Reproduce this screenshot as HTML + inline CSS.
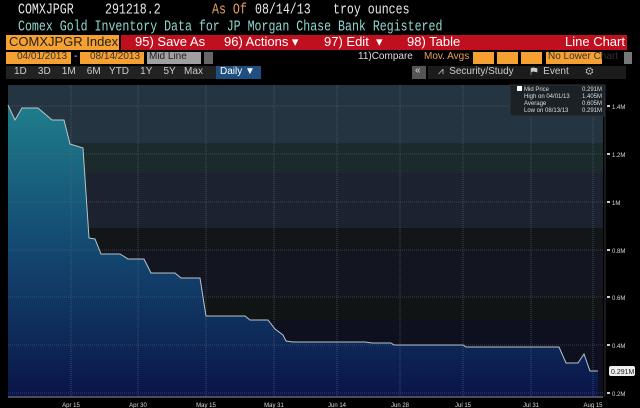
<!DOCTYPE html>
<html><head><style>
body{margin:0;width:640px;height:408px;background:#000;overflow:hidden;position:relative;font-family:"Liberation Mono",monospace;}
.a{position:absolute;white-space:nowrap;}
.s{font-family:"Liberation Sans",sans-serif;}
.h{font-size:11.6px;transform:scaleY(1.25);transform-origin:0 0;}
</style></head><body>
<div class="a h" style="left:18px;top:2px;color:#e8e8e8">COMXJPGR</div>
<div class="a h" style="left:105px;top:2px;color:#e8e8e8">291218.2</div>
<div class="a h" style="left:212px;top:2px;color:#e8a060">As Of</div>
<div class="a h" style="left:255px;top:2px;color:#e8e8e8">08/14/13</div>
<div class="a h" style="left:333px;top:2px;color:#e8e8e8">troy ounces</div>
<div class="a h" style="left:18px;top:19px;color:#8fd8d0">Comex Gold Inventory Data for JP Morgan Chase Bank Registered</div>
<div class="a" style="left:6px;top:35px;width:113px;height:15px;background:#f5a030"></div>
<div class="a s" style="left:9px;top:34px;font-size:13px;color:#202020">COMXJPGR Index</div>
<div class="a" style="left:121px;top:35px;width:506px;height:15px;background:#c01020"></div>
<div class="a s" style="left:135px;top:34px;font-size:13px;color:#fff">95) Save As</div>
<div class="a s" style="left:224px;top:34px;font-size:13px;color:#fff">96) Actions ▾</div>
<div class="a s" style="left:324px;top:34px;font-size:13px;color:#fff">97) Edit&nbsp;&nbsp;▾</div>
<div class="a s" style="left:407px;top:34px;font-size:13px;color:#fff">98) Table</div>
<div class="a s" style="left:565px;top:34px;font-size:13px;color:#fff">Line Chart</div>
<div class="a" style="left:6px;top:52px;width:65px;height:12px;background:#f5a030"></div>
<div class="a" style="left:80px;top:52px;width:64px;height:12px;background:#f5a030"></div>
<div class="a s" style="left:17px;top:51px;font-size:10px;color:#333">04/01/2013</div>
<div class="a s" style="left:74px;top:51px;font-size:10px;color:#ddd">-</div>
<div class="a s" style="left:90px;top:51px;font-size:10px;color:#333">08/14/2013</div>
<div class="a" style="left:147px;top:52px;width:54px;height:12px;background:#a0a0a0"></div>
<div class="a s" style="left:149px;top:51px;font-size:10px;color:#222">Mid Line</div>
<div class="a" style="left:204px;top:52px;width:9px;height:12px;background:#666"></div>
<div class="a s" style="left:358px;top:51px;font-size:10px;color:#ddd">11)Compare</div>
<div class="a s" style="left:424px;top:51px;font-size:10px;color:#e8a060">Mov. Avgs</div>
<div class="a" style="left:473px;top:52px;width:21px;height:12px;background:#f5a030"></div>
<div class="a" style="left:497px;top:52px;width:21px;height:12px;background:#f5a030"></div>
<div class="a" style="left:521px;top:52px;width:21px;height:12px;background:#f5a030"></div>
<div class="a" style="left:546px;top:52px;width:56px;height:12px;background:#f5a030"></div>
<div class="a s" style="left:548px;top:51px;font-size:10px;color:#333">No Lower Chart</div>
<div class="a" style="left:624px;top:52px;width:8px;height:12px;background:#777"></div>
<div class="a" style="left:6px;top:66px;width:254px;height:13px;background:#222"></div>
<div class="a s" style="left:14px;top:66px;font-size:10px;color:#ccc;word-spacing:0">1D&nbsp;&nbsp;&nbsp;&nbsp;3D&nbsp;&nbsp;&nbsp;&nbsp;1M&nbsp;&nbsp;&nbsp;&nbsp;6M&nbsp;&nbsp;&nbsp;YTD&nbsp;&nbsp;&nbsp;&nbsp;1Y&nbsp;&nbsp;&nbsp;&nbsp;5Y&nbsp;&nbsp;&nbsp;Max</div>
<div class="a" style="left:216px;top:66px;width:45px;height:13px;background:#1f4f7f"></div>
<div class="a s" style="left:220px;top:66px;font-size:10px;color:#fff">Daily ▼</div>
<div class="a" style="left:412px;top:66px;width:14px;height:13px;background:#555"></div>
<div class="a s" style="left:415px;top:65px;font-size:10px;color:#ddd">«</div>
<div class="a" style="left:428px;top:66px;width:198px;height:13px;background:#1c1c1c"></div>
<div class="a s" style="left:438px;top:66px;font-size:10px;color:#ccc">⩘&nbsp;&nbsp;Security/Study&nbsp;&nbsp;&nbsp;&nbsp;&nbsp;&nbsp;⚑&nbsp;&nbsp;Event&nbsp;&nbsp;&nbsp;&nbsp;&nbsp;&nbsp;⚙</div>
<svg class="a" style="left:0;top:0" width="640" height="408">
<defs>
<linearGradient id="g" x1="0" y1="100" x2="0" y2="398" gradientUnits="userSpaceOnUse"><stop offset="0" stop-color="#207f8c"/><stop offset="0.45" stop-color="#144d74"/><stop offset="1" stop-color="#0a1448"/></linearGradient></defs>
<rect x="8" y="85" width="595" height="58" fill="#243440"/>
<rect x="8" y="143" width="595" height="30" fill="#1b2a2a"/>
<rect x="8" y="173" width="595" height="55" fill="#1c2230"/>
<rect x="8" y="228" width="595" height="22" fill="#121618"/>
<rect x="8" y="250" width="595" height="47" fill="#131520"/>
<rect x="8" y="297" width="595" height="23" fill="#111415"/>
<rect x="8" y="320" width="595" height="78" fill="#0e1020"/>
<polygon fill="url(#g)" points="8,105 15,120 22,108 38,108 52,120 64,120 70,144 83,148 89,238 95,239 101,254 120,254 128,259 144,259 151,273 175,273 181,278 200,278 206,316 245,316 250,320 268,320 275,329 283,335 286,341 293,342 365,342 372,343 391,343 394,345 463,345 466,347 559,347 566,363 578,363 584,354 590,371 598,371 598,397 8,397"/>
<g stroke="#5a6a78" stroke-width="0.6" stroke-dasharray="1,1">
<line x1="71" y1="85" x2="71" y2="397"/><line x1="138" y1="85" x2="138" y2="397"/><line x1="206" y1="85" x2="206" y2="397"/><line x1="274" y1="85" x2="274" y2="397"/><line x1="337" y1="85" x2="337" y2="397"/><line x1="400" y1="85" x2="400" y2="397"/><line x1="463" y1="85" x2="463" y2="397"/><line x1="531" y1="85" x2="531" y2="397"/><line x1="593" y1="85" x2="593" y2="397"/>
<line x1="8" y1="106" x2="603" y2="106"/><line x1="8" y1="154" x2="603" y2="154"/><line x1="8" y1="202" x2="603" y2="202"/><line x1="8" y1="250" x2="603" y2="250"/><line x1="8" y1="297" x2="603" y2="297"/><line x1="8" y1="345" x2="603" y2="345"/><line x1="8" y1="393" x2="603" y2="393"/>
</g>
<polyline fill="none" stroke="#b8c4cc" stroke-width="1" points="8,105 15,120 22,108 38,108 52,120 64,120 70,144 83,148 89,238 95,239 101,254 120,254 128,259 144,259 151,273 175,273 181,278 200,278 206,316 245,316 250,320 268,320 275,329 283,335 286,341 293,342 365,342 372,343 391,343 394,345 463,345 466,347 559,347 566,363 578,363 584,354 590,371 598,371"/>
<line x1="8" y1="397" x2="603" y2="397" stroke="#888" stroke-width="1"/>
<line x1="605" y1="85" x2="605" y2="397" stroke="#333" stroke-width="1"/>
<rect x="510" y="85" width="95" height="31" fill="#1a2228" stroke="#333"/>
<g font-family="Liberation Sans,sans-serif" font-size="6" fill="#ddd">
<rect x="517" y="86" width="5" height="5" fill="#fff"/>
<text x="524" y="91">Mid Price</text><text x="602" y="91" text-anchor="end">0.291M</text>
<text x="524" y="98">High on 04/01/13</text><text x="602" y="98" text-anchor="end">1.405M</text>
<text x="524" y="105">Average</text><text x="602" y="105" text-anchor="end">0.605M</text>
<text x="524" y="112">Low on 08/13/13</text><text x="602" y="112" text-anchor="end">0.291M</text>
<text x="612" y="109">1.4M</text><text x="612" y="157">1.2M</text><text x="612" y="205">1M</text><text x="612" y="253">0.8M</text><text x="612" y="300">0.6M</text><text x="612" y="348">0.4M</text><text x="612" y="396">0.2M</text>
<text x="71" y="407" text-anchor="middle">Apr 15</text><text x="138" y="407" text-anchor="middle">Apr 30</text><text x="206" y="407" text-anchor="middle">May 15</text><text x="274" y="407" text-anchor="middle">May 31</text><text x="337" y="407" text-anchor="middle">Jun 14</text><text x="400" y="407" text-anchor="middle">Jun 28</text><text x="463" y="407" text-anchor="middle">Jul 15</text><text x="531" y="407" text-anchor="middle">Jul 31</text><text x="593" y="407" text-anchor="middle">Aug 15</text>
</g>
<g fill="#ccc"><rect x="607" y="105" width="3" height="2"/><rect x="607" y="153" width="3" height="2"/><rect x="607" y="201" width="3" height="2"/><rect x="607" y="249" width="3" height="2"/><rect x="607" y="296" width="3" height="2"/><rect x="607" y="344" width="3" height="2"/><rect x="607" y="392" width="3" height="2"/></g>
<rect x="609" y="366" width="26" height="10" rx="2" fill="#eee"/>
<text x="611" y="374" font-family="Liberation Sans,sans-serif" font-size="7" fill="#222">0.291M</text>
</svg>
</body></html>
